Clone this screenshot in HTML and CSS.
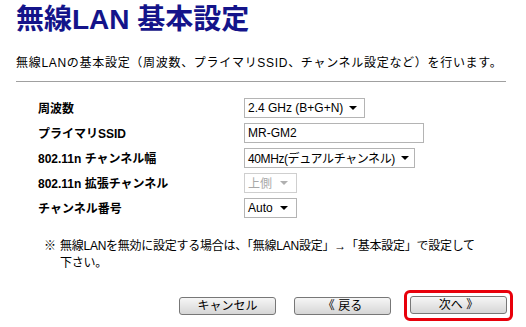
FILE: index.html
```html
<!DOCTYPE html>
<html lang="ja">
<head>
    <meta charset="utf-8">
    <title>無線LAN 基本設定</title>
    <link rel="stylesheet" href="styles.css">
</head>
<body>

    <div class="page">
        <h1 class="title">無線LAN 基本設定</h1>
        <p class="desc">無線LANの基本設定（周波数、プライマリSSID、チャンネル設定など）を行います。</p>
        <div class="rule"></div>

        <div class="settings">
            <div class="label">周波数</div>
            <div class="field">
                <div class="select w-freq">
                    <span class="val">2.4 GHz (B+G+N)</span>
                    <span class="arrow"></span>
                </div>
            </div>

            <div class="label">プライマリSSID</div>
            <div class="field">
                <input type="text" class="inp" value="MR-GM2">
            </div>

            <div class="label">802.11n チャンネル幅</div>
            <div class="field">
                <div class="select w-width">
                    <span class="val">40MHz(デュアルチャンネル)</span>
                    <span class="arrow"></span>
                </div>
            </div>

            <div class="label">802.11n 拡張チャンネル</div>
            <div class="field">
                <div class="select w-small disabled">
                    <span class="val">上側</span>
                    <span class="arrow"></span>
                </div>
            </div>

            <div class="label">チャンネル番号</div>
            <div class="field">
                <div class="select w-small">
                    <span class="val">Auto</span>
                    <span class="arrow"></span>
                </div>
            </div>
        </div>

        <div class="note">
            <span class="mark">※</span>
            <span class="note-text">無線LANを無効に設定する場合は、「無線LAN設定」→「基本設定」で設定して<br>下さい。</span>
        </div>

        <div class="buttons">
            <button type="button" class="btn">キャンセル</button>
            <button type="button" class="btn">《 戻る</button>
            <div class="highlight">
                <button type="button" class="btn">次へ 》</button>
            </div>
        </div>
    </div>

</body>
</html>
```

FILE: styles.css
```css
body {
    margin: 0;
    background: #fff;
    font-family: "Liberation Sans", "Noto Sans CJK JP", sans-serif;
    font-size: 12px;
    color: #000;
}

.page {
    padding: 5px 20px 0 16px;
}

.title {
    margin: 0;
    font-size: 28px;
    line-height: 30px;
    font-weight: bold;
    color: #14148a;
}

.desc {
    margin: 20px 0 0 0;
    line-height: 16px;
    letter-spacing: 0.7px;
    white-space: nowrap;
}

.rule {
    margin-top: 10px;
    width: 490px;
    height: 1px;
    background: #a0a0a0;
}

.settings {
    display: grid;
    grid-template-columns: 206px auto;
    grid-auto-rows: 25px;
    align-items: center;
    margin-top: 13px;
    padding-left: 22px;
}

.label {
    font-weight: bold;
    font-size: 12px;
    white-space: nowrap;
}

.field {
    display: flex;
    align-items: center;
}

.select {
    display: flex;
    align-items: center;
    justify-content: space-between;
    box-sizing: border-box;
    height: 20px;
    padding: 0 8px 0 3px;
    border: 1px solid #b4b4b4;
    background: #fff;
    white-space: nowrap;
}

.select .arrow {
    flex-shrink: 0;
    width: 0;
    height: 0;
    margin-left: 6px;
    border-left: 4px solid transparent;
    border-right: 4px solid transparent;
    border-top: 4px solid #000;
}

.select.disabled {
    border-color: #cfcfcf;
    color: #a8a8a8;
}

.select.disabled .arrow {
    border-top-color: #b0b0b0;
}

.w-freq {
    width: 121px;
}

.w-width {
    width: 171px;
    letter-spacing: -0.4px;
}

.w-small {
    width: 53px;
}

.inp {
    box-sizing: border-box;
    width: 180px;
    height: 20px;
    margin: 0;
    padding: 0 3px;
    border: 1px solid #b4b4b4;
    font-family: "Liberation Sans", "Noto Sans CJK JP", sans-serif;
    font-size: 12px;
    color: #000;
}

.note {
    display: flex;
    margin-top: 18px;
    padding-left: 28px;
    line-height: 17px;
    letter-spacing: -0.25px;
    white-space: nowrap;
}

.mark {
    width: 16px;
    flex-shrink: 0;
}

.buttons {
    display: flex;
    align-items: center;
    margin-top: 18px;
    padding-left: 163px;
}

.btn {
    flex-shrink: 0;
    box-sizing: border-box;
    width: 97px;
    height: 18px;
    margin: 0 18px 0 0;
    padding: 0;
    border: 1px solid #777;
    border-radius: 3px;
    background: linear-gradient(to bottom, #f6f6f6, #d6d6d6);
    font-family: "Liberation Sans", "Noto Sans CJK JP", sans-serif;
    font-size: 12px;
    line-height: 16px;
    color: #000;
    cursor: pointer;
}

.highlight {
    flex-shrink: 0;
    margin-left: -5px;
    padding: 3px 3px 4px 3px;
    border: 3px solid #e8000b;
    border-radius: 6px;
}

.highlight .btn {
    display: block;
    margin: 0;
}
```
